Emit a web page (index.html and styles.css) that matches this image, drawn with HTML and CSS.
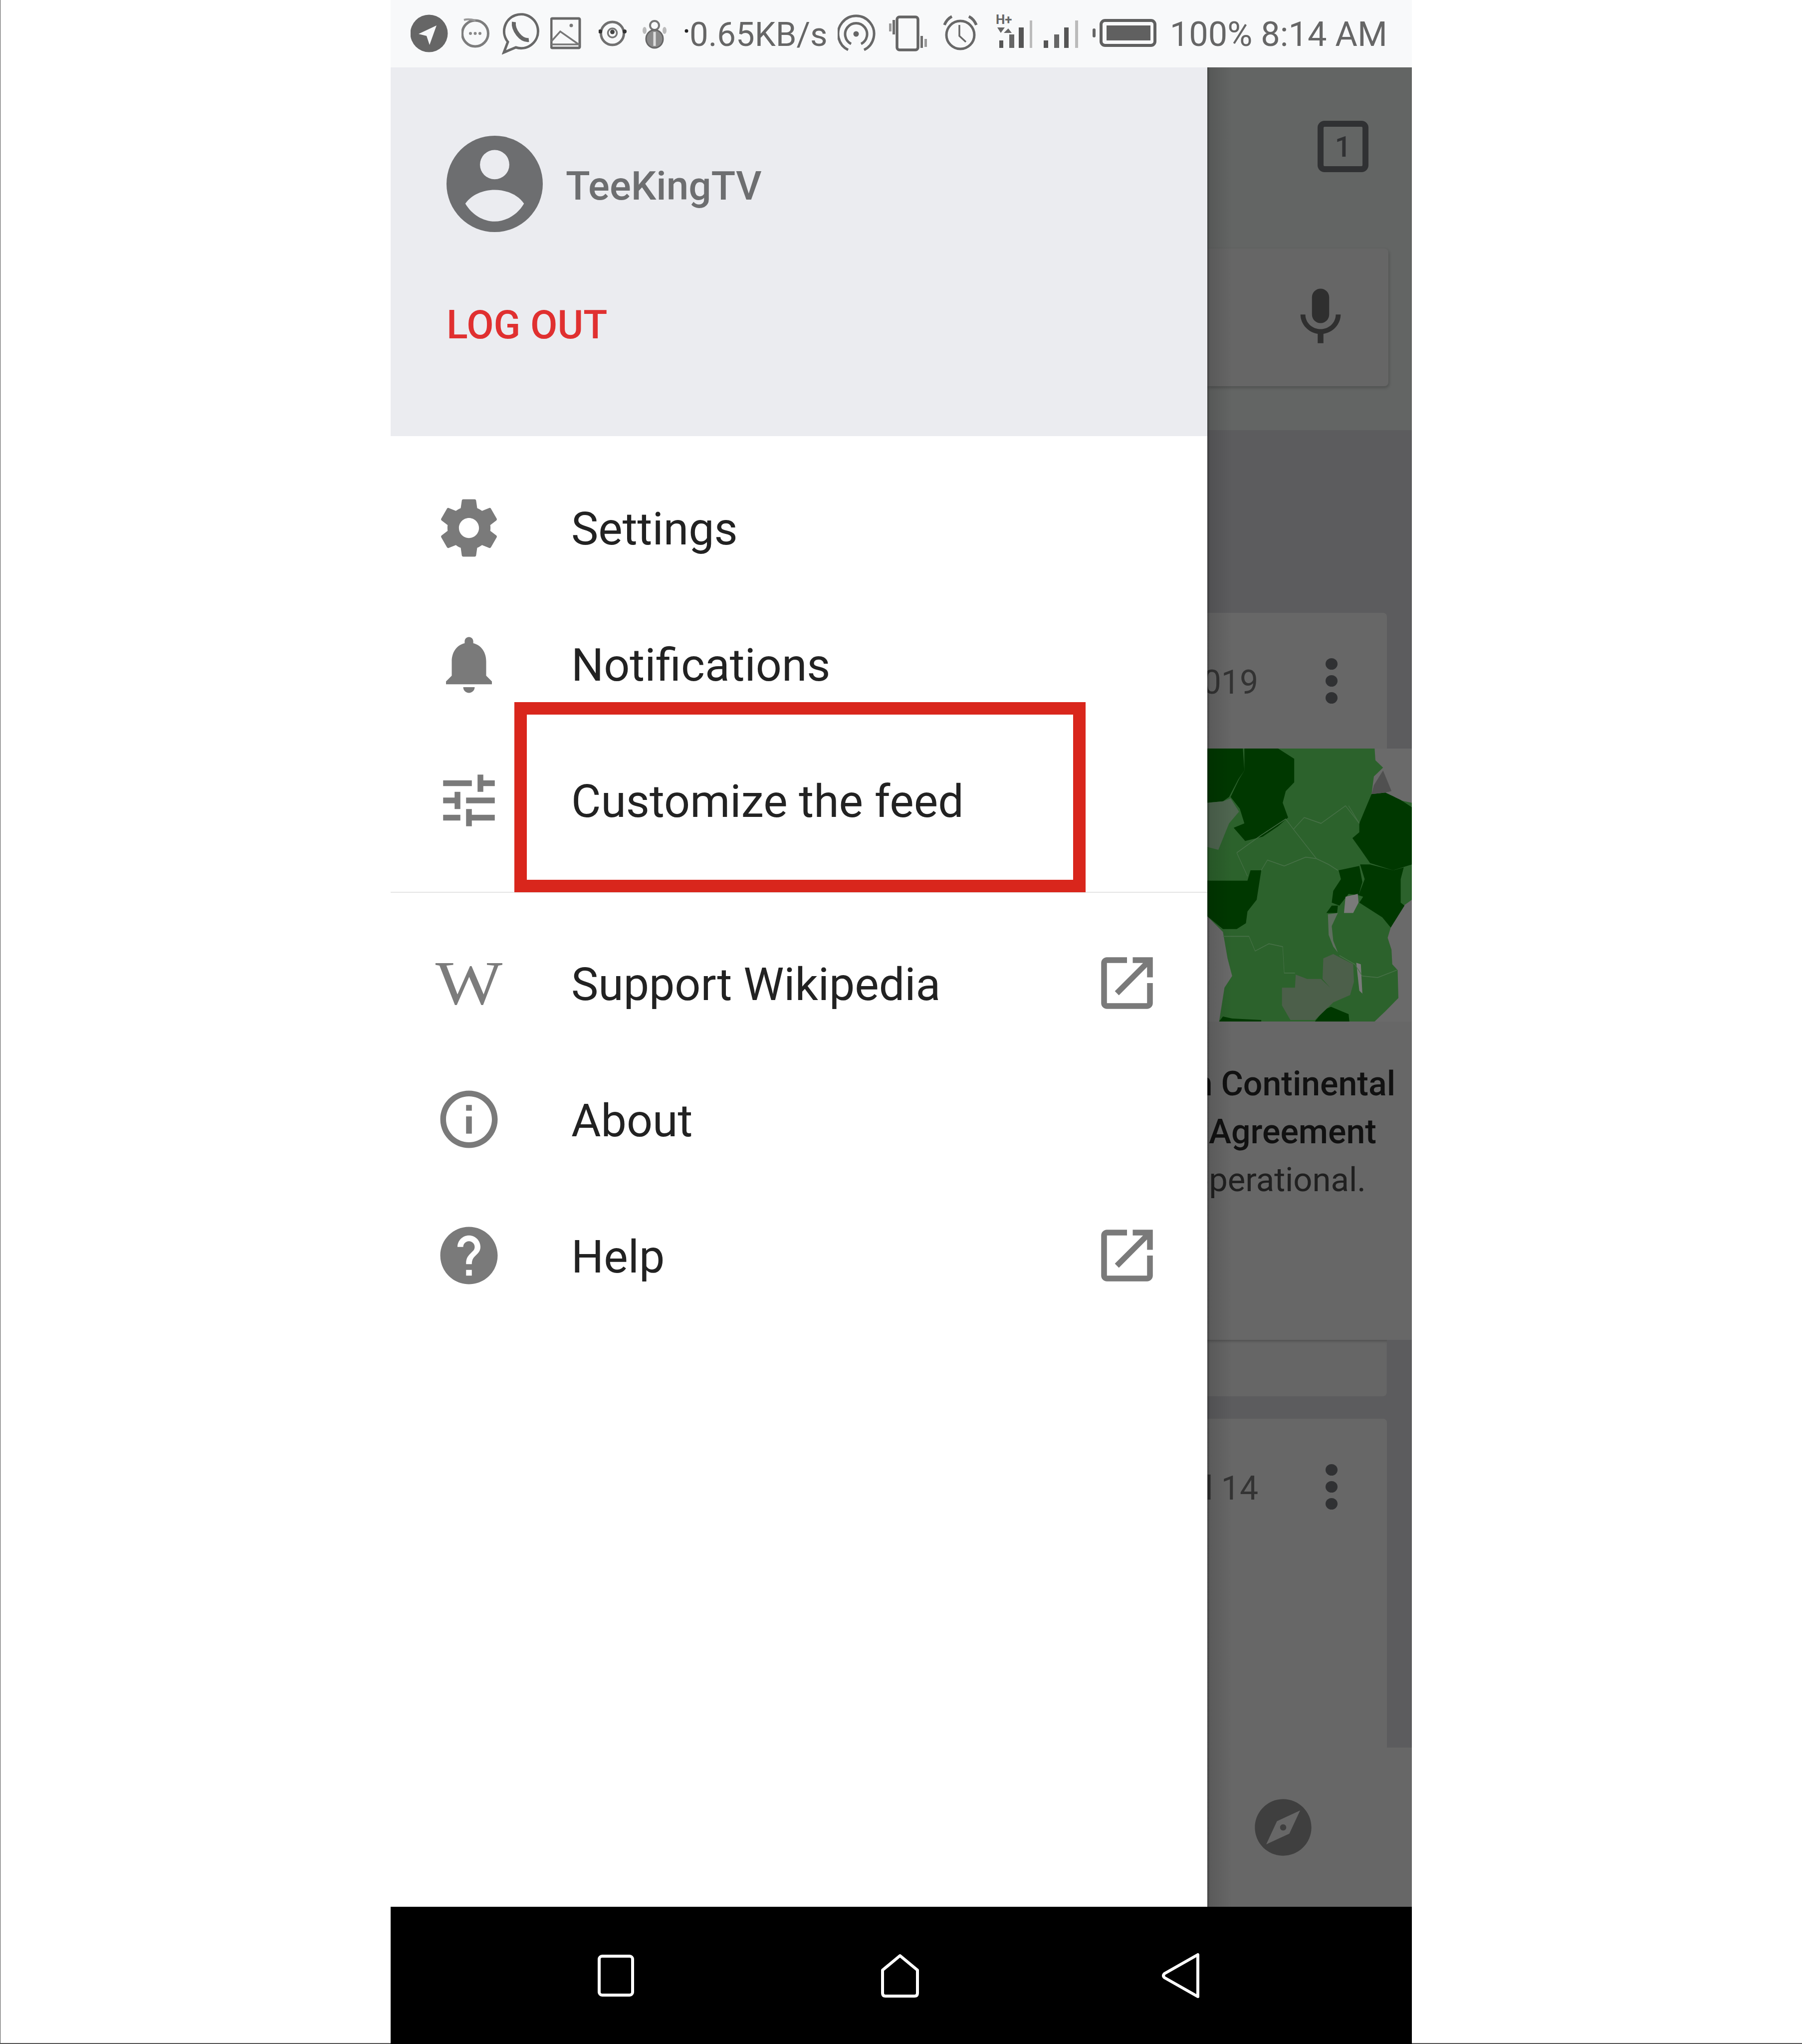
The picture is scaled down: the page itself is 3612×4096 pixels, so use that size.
FILE: index.html
```html
<!DOCTYPE html>
<html lang="en">
<head>
<meta charset="utf-8">
<title>Wikipedia drawer</title>
<link rel="stylesheet" href="styles.css">
</head>
<body>
<div class="phone">
  <div class="status">
    <svg class="si" width="102" height="134" viewBox="0 0 102 134"><circle cx="37" cy="67" r="37.5" fill="#666"/><path d="M52 51 16 68 32 72 38 90Z" fill="#f8f9fa"/></svg>
    <svg class="si" width="81" height="134" viewBox="0 0 81 134"><circle cx="27.5" cy="67" r="26" fill="none" stroke="#7d7d7d" stroke-width="5"/><path d="M5 40Q14 37 28 41" fill="none" stroke="#999" stroke-width="4"/><circle cx="18" cy="67" r="3" fill="#888"/><circle cx="27.5" cy="67" r="3" fill="#888"/><circle cx="37" cy="67" r="3" fill="#888"/></svg>
    <svg class="si" width="97" height="134" viewBox="0 0 97 134"><path d="M12 84A34 34 0 1 1 28 95L4 105Z" fill="none" stroke="#686868" stroke-width="5"/><path d="M24 44C22 60 38 82 54 80" fill="none" stroke="#666" stroke-width="8"/></svg>
    <svg class="si" width="97" height="134" viewBox="0 0 97 134"><rect x="2" y="37" width="57" height="59" rx="2" fill="none" stroke="#686868" stroke-width="5"/><path d="M2 83 20 63 57 89M2 89H59" fill="none" stroke="#777" stroke-width="3.5"/><circle cx="42" cy="51" r="3.5" fill="#777"/></svg>
    <svg class="si" width="88" height="134" viewBox="0 0 88 134"><circle cx="27.5" cy="67" r="23" fill="none" stroke="#707070" stroke-width="5"/><circle cx="27.5" cy="66" r="9" fill="none" stroke="#777" stroke-width="3.5"/><circle cx="27.5" cy="64" r="4.5" fill="#444"/><circle cx="3" cy="63" r="4" fill="#333"/><circle cx="52" cy="63" r="4" fill="#333"/></svg>
    <svg class="si" width="83" height="134" viewBox="0 0 83 134"><circle cx="24" cy="51" r="9" fill="none" stroke="#777" stroke-width="4"/><ellipse cx="24" cy="78" rx="17" ry="18" fill="#8a8a8a" stroke="#666" stroke-width="3"/><rect x="21.500" y="64" width="5" height="28" fill="#ddd"/><ellipse cx="4" cy="61" rx="4" ry="7" fill="#bbb"/><ellipse cx="44" cy="61" rx="4" ry="7" fill="#bbb"/></svg>
    <svg class="si" width="11" height="134" viewBox="0 0 11 134"><circle cx="5" cy="62" r="3.5" fill="#222"/></svg>
    <span class="stext speed">0.65KB/s</span>
    <svg class="si" width="102" height="134" viewBox="0 0 102 134"><path d="M21 100A36 36 0 1 1 53 100M27 88A22 22 0 1 1 47 88" fill="none" stroke="#686868" stroke-width="5"/><circle cx="37" cy="68" r="5.500" fill="#666"/></svg>
    <svg class="si" width="107" height="134" viewBox="0 0 107 134"><rect x="17" y="34" width="42" height="66" rx="5" fill="none" stroke="#646464" stroke-width="5.500"/><rect x="1" y="47" width="5" height="16" fill="#999"/><rect x="8" y="40" width="5" height="29" fill="#6e6e6e"/><rect x="64" y="72" width="5" height="24" fill="#6e6e6e"/><rect x="72" y="78" width="5" height="16" fill="#999"/></svg>
    <svg class="si" width="108" height="134" viewBox="0 0 108 134"><circle cx="37" cy="70" r="28" fill="none" stroke="#686868" stroke-width="5"/><path d="M35 50V72L48 84" fill="none" stroke="#686868" stroke-width="3.500"/><path d="M5 50Q10 38 20 33M69 50Q64 38 54 33" fill="none" stroke="#686868" stroke-width="5.500"/></svg>
    <svg class="si" width="96" height="134" viewBox="0 0 96 134"><text x="0" y="48" class="hplus">H+</text><path d="M3 55H18L10 66ZM16 66H32L25 57Z" fill="#666"/><rect x="7" y="81" width="8" height="15" fill="#555"/><rect x="27" y="69" width="10" height="27" fill="#666"/><rect x="46" y="55" width="10" height="41" fill="#555"/><rect x="68" y="41" width="5" height="55" fill="#bbb"/></svg>
    <svg class="si" width="98" height="134" viewBox="0 0 98 134"><rect x="0" y="81" width="9" height="15" fill="#555"/><rect x="21" y="69" width="10" height="27" fill="#666"/><rect x="41" y="55" width="9" height="41" fill="#555"/><rect x="63" y="41" width="6" height="55" fill="#bbb"/></svg>
    <svg class="si" width="158" height="134" viewBox="0 0 158 134"><rect x="0" y="57" width="6" height="18" rx="3" fill="#666"/><rect x="17" y="41" width="108" height="50" rx="8" fill="none" stroke="#606060" stroke-width="6"/><rect x="28" y="51" width="88" height="30" fill="#606060"/></svg>
    <span class="stext clock">100% 8:14 AM</span>
  </div>

  <div class="main">
    <div class="drawer">
      <div class="head">
        <div class="user">
          <svg class="avatar" width="193" height="193" viewBox="0 0 210 210"><circle cx="105" cy="105" r="105" fill="#6d6e70"/><circle cx="105" cy="63" r="32" fill="#ebecf0"/><path d="M41 148C55 128 80 118 105 118C130 118 155 128 169 148C155 172 130 187 105 187C80 187 55 172 41 148Z" fill="#ebecf0"/></svg>
          <span class="name">TeeKingTV</span>
        </div>
        <div class="logout">LOG OUT</div>
      </div>

      <div class="menu menu-top">
        <div class="row">
          <svg class="ico" viewBox="0 0 24 24"><path d="M19.43 12.98c.04-.32.07-.64.07-.98s-.03-.66-.07-.98l2.11-1.65c.19-.15.24-.42.12-.64l-2-3.46c-.12-.22-.39-.3-.61-.22l-2.49 1c-.52-.4-1.08-.73-1.69-.98l-.38-2.65C14.46 2.18 14.25 2 14 2h-4c-.25 0-.46.18-.49.42l-.38 2.65c-.61.25-1.17.59-1.69.98l-2.49-1c-.23-.09-.49 0-.61.22l-2 3.46c-.13.22-.07.49.12.64l2.11 1.65c-.04.32-.07.65-.07.98s.03.66.07.98l-2.11 1.65c-.19.15-.24.42-.12.64l2 3.46c.12.22.39.3.61.22l2.49-1c.52.4 1.08.73 1.69.98l.38 2.65c.03.24.24.42.49.42h4c.25 0 .46-.18.49-.42l.38-2.65c.61-.25 1.17-.59 1.69-.98l2.49 1c.23.09.49 0 .61-.22l2-3.46c.12-.22.07-.49-.12-.64l-2.11-1.65zM12 15.5c-1.93 0-3.5-1.57-3.5-3.5s1.57-3.5 3.5-3.5 3.5 1.57 3.5 3.5-1.57 3.5-3.5 3.5z"/></svg>
          <span class="label">Settings</span>
        </div>
        <div class="row">
          <svg class="ico" viewBox="0 0 24 24"><path d="M12 22c1.1 0 2-.9 2-2h-4c0 1.1.89 2 2 2zm6-6v-5c0-3.07-1.64-5.64-4.5-6.32V4c0-.83-.67-1.5-1.5-1.5s-1.5.67-1.5 1.5v.68C7.63 5.36 6 7.92 6 11v5l-2 2v1h16v-1l-2-2z"/></svg>
          <span class="label">Notifications</span>
        </div>
        <div class="row">
          <svg class="ico" viewBox="0 0 24 24"><path d="M3 17v2h6v-2H3zM3 5v2h10V5H3zm10 16v-2h8v-2h-8v-2h-2v6h2zM7 9v2H3v2h4v2h2V9H7zm14 4v-2H11v2h10zm-6-4h2V7h4V5h-4V3h-2v6z"/></svg>
          <span class="label">Customize the feed</span>
        </div>
        <div class="annot"></div>
      </div>

      <div class="menu menu-low">
        <div class="row">
          <span class="ico wbox"><span class="wlogo">W</span></span>
          <span class="label">Support Wikipedia</span>
          <svg class="ico ext" viewBox="0 0 24 24"><path d="M19 19H5V5h7V3H5c-1.11 0-2 .9-2 2v14c0 1.1.89 2 2 2h14c1.1 0 2-.9 2-2v-7h-2v7zM14 3v2h3.59l-9.83 9.83 1.41 1.41L19 6.41V10h2V3h-7z"/></svg>
        </div>
        <div class="row">
          <svg class="ico" viewBox="0 0 24 24"><path d="M11 7h2v2h-2zm0 4h2v6h-2zm1-9C6.48 2 2 6.48 2 12s4.48 10 10 10 10-4.48 10-10S17.52 2 12 2zm0 18c-4.41 0-8-3.59-8-8s3.59-8 8-8 8 3.59 8 8-3.59 8-8 8z"/></svg>
          <span class="label">About</span>
        </div>
        <div class="row">
          <svg class="ico" viewBox="0 0 24 24"><path d="M12 2C6.48 2 2 6.48 2 12s4.48 10 10 10 10-4.48 10-10S17.52 2 12 2zm1 17h-2v-2h2v2zm2.07-7.75l-.9.92C13.45 12.9 13 13.5 13 15h-2v-.5c0-1.1.45-2.1 1.17-2.83l1.24-1.26c.37-.36.59-.86.59-1.41 0-1.1-.9-2-2-2s-2 .9-2 2H8c0-2.21 1.79-4 4-4s4 1.79 4 4c0 .88-.36 1.68-.93 2.25z"/></svg>
          <span class="label">Help</span>
          <svg class="ico ext" viewBox="0 0 24 24"><path d="M19 19H5V5h7V3H5c-1.11 0-2 .9-2 2v14c0 1.1.89 2 2 2h14c1.1 0 2-.9 2-2v-7h-2v7zM14 3v2h3.59l-9.83 9.83 1.41 1.41L19 6.41V10h2V3h-7z"/></svg>
        </div>
      </div>
    </div>

    <div class="behind">
      <div class="b-top">
        <div class="tab">1</div>
        <div class="search">
          <svg class="mic" viewBox="0 0 24 24"><path d="M12 14c1.66 0 3-1.34 3-3V5c0-1.66-1.34-3-3-3S9 3.34 9 5v6c0 1.66 1.34 3 3 3zm5.3-3c0 3-2.54 5.1-5.3 5.1S6.7 14 6.7 11H5c0 3.41 2.72 6.23 6 6.72V21h2v-3.28c3.28-.48 6-3.3 6-6.72h-1.7z"/></svg>
        </div>
      </div>
      <div class="b-feed">
        <div class="c-head">
          <span class="date">2019</span>
          <span class="dots"><i></i><i></i><i></i></span>
        </div>
        <svg class="map" width="410" height="547" viewBox="138 515 1335 930" preserveAspectRatio="none">
          <rect x="138" y="515" width="1335" height="930" fill="#6a6a6a"/>
          <g class="land">
          <path fill="#2c622c" d="M135 515H1230L1235 555 1285 580 1225 610 1210 670 1473 700V1030L1420 1050 1335 1125 1315 1160 1340 1200 1345 1250 1380 1270 1385 1365 1300 1410 1230 1445H215L250 1330 300 1290 270 1230 240 1140 135 1085Z"/>
          <g fill="#003800">
            <path d="M135 515H370L380 590 340 620 280 680 240 695 135 700Z"/>
            <path d="M380 515H600L705 550V630L650 660 630 700 665 750 600 780 500 815 385 830 310 785 380 770 350 720 290 680 345 620 380 590Z"/>
            <path d="M1210 670 1300 665 1400 690 1473 715V910L1350 930 1200 905 1140 860 1085 820 1130 800V770L1170 720Z"/>
            <path d="M135 965H400L420 930H490L460 1030 400 1070 390 1110 330 1130H240L135 1085Z"/>
            <path d="M995 930 1130 915 1150 970 1125 1015 1060 1010 1000 1050 950 1040 960 1000 1010 960Z"/>
            <path d="M1135 910H1200L1350 930 1420 920 1400 960V1040L1425 1050 1335 1125 1280 1090 1130 1040 1155 1020 1125 1015 1165 960Z"/>
            <path d="M915 1075 950 1050H990L985 1075Z"/>
            <path d="M840 1445 900 1405 945 1395 1060 1420 1065 1445Z"/>
            <path d="M215 1445 240 1428 300 1435 490 1440V1445Z"/>
          </g>
          <path fill="#4f6650" d="M135 700 240 695 290 685 345 730 280 770 210 860 135 850Z"/>
          <path fill="#4c5f4a" d="M625 1330H710L715 1285 790 1300H880L940 1330 890 1300 895 1230 960 1215 1090 1250 1095 1310 1070 1355 960 1380 840 1440H680L625 1390Z"/>
          <path fill="#505050" d="M1285 590 1225 640 1210 670 1300 665 1340 660Z"/>
          <path fill="#7a7a7a" d="M1040 1020 1120 1010 1125 1040 1090 1075H1030Z"/>
          <path fill="#5f6f5f" d="M925 1080 990 1075 950 1120 960 1170 990 1210 960 1190 930 1150Z"/>
          <path fill="#7a7a7a" d="M1110 1245 1140 1250 1150 1350 1170 1360 1130 1340Z"/>
          <g fill="none" stroke="#477147" stroke-width="3">
            <path d="M700 790 770 750 880 770 1040 710 1130 770"/>
            <path d="M700 790 850 890 930 910 990 930"/>
            <path d="M330 870 400 950M330 870 490 810 650 755 700 790"/>
            <path d="M490 930 530 895 640 915 780 885 850 890"/>
            <path d="M240 1155H410L450 1205 540 1180 630 1190 640 1280H710"/>
            <path d="M1060 710 1130 770"/>
            <path d="M1000 1220 1100 1250 1150 1290 1250 1295 1375 1270"/>
          </g>
          </g>
        </svg>
        <div class="c-body">
          <div class="line bold l1">the African Continental</div>
          <div class="line bold l2">Free Trade Agreement</div>
          <div class="line l3">now operational.</div>
        </div>
        <div class="stack"></div>
        <div class="card2">
          <div class="c-head">
            <span class="date">Jul 14</span>
            <span class="dots"><i></i><i></i><i></i></span>
          </div>
        </div>
      </div>
      <div class="b-bottom">
        <svg class="compass" viewBox="0 0 24 24"><path d="M12 10.9c-.61 0-1.1.49-1.1 1.1s.49 1.1 1.1 1.1c.61 0 1.1-.49 1.1-1.1s-.49-1.1-1.1-1.1zM12 2C6.48 2 2 6.48 2 12s4.48 10 10 10 10-4.48 10-10S17.52 2 12 2zm2.19 12.19L6 18l3.81-8.19L18 6l-3.81 8.19z"/></svg>
      </div>
    </div>
  </div>

  <div class="nav">
    <svg width="73" height="84" viewBox="0 0 73 84"><rect x="3" y="3" width="67" height="78" rx="6" fill="none" stroke="#fff" stroke-width="6"/></svg>
    <svg class="home" width="76" height="88" viewBox="0 0 76 88"><path d="M38 4 73 33V79Q73 85 67 85H9Q3 85 3 79V33Z" fill="none" stroke="#fff" stroke-width="6" stroke-linejoin="round"/></svg>
    <svg width="75" height="92" viewBox="0 0 75 92"><path d="M72 4V88L5 50Q1 46 5 42Z" fill="none" stroke="#fff" stroke-width="6" stroke-linejoin="round"/></svg>
  </div>
</div>
</body>
</html>
```

FILE: styles.css
```css
* { box-sizing: border-box; }
html, body { margin: 0; padding: 0; }
body {
  width: 3612px;
  height: 4096px;
  overflow: hidden;
  background: #fff;
  font-family: Roboto, "Liberation Sans", sans-serif;
  box-shadow: inset 1px 0 #555, inset 0 -2px #555;
}
.phone {
  width: 2047px;
  height: 4096px;
  margin-left: 783px;
  display: flex;
  flex-direction: column;
}

/* status bar */
.status {
  height: 135px;
  flex: none;
  background: #f8f9fa;
  padding-left: 40px;
  display: flex;
  align-items: flex-start;
}
.si { display: block; flex: none; }
.stext {
  font-size: 67px;
  line-height: 80px;
  margin-top: 29px;
  color: #666;
  white-space: nowrap;
}
.speed { margin-right: 20px; }
.clock { font-size: 68.5px; margin-left: -3px; }
.hplus { font-family: Roboto, sans-serif; font-size: 26px; font-weight: 700; fill: #666; }

/* main */
.main { flex: 1; min-height: 0; display: flex; }
.drawer { width: 1637px; flex: none; background: #fff; display: flex; flex-direction: column; }
.head { height: 739px; flex: none; background: #ebecf0; padding: 137px 0 0 112px; }
.user { display: flex; align-items: center; gap: 46px; }
.avatar { display: block; flex: none; }
.name { font-size: 80px; line-height: 94px; font-weight: 500; color: #6d6e70; position: relative; top: 4px; }
.logout { margin-top: 139px; font-size: 79px; line-height: 94px; font-weight: 500; color: #e03030; }

.menu { padding: 47px 0; position: relative; }
.menu-top { border-bottom: 2px solid #e4e4e4; }
.row { height: 273px; display: flex; align-items: center; padding-left: 88px; }
.ico { width: 138px; height: 138px; fill: #7a7a7a; flex: none; display: block; }
.label { margin-left: 136px; font-size: 91.4px; line-height: 106px; color: #222; white-space: nowrap; }
.menu-top .label { margin-top: 5px; }
.menu-low .ico { margin-top: -6px; }
.ext { margin-left: auto; margin-right: 92px; }
.wbox { display: flex; align-items: center; justify-content: center; }
.wlogo { font-family: "Liberation Serif", serif; font-size: 125px; line-height: 138px; color: #7c7c7c; transform: scaleX(1.14); }
.annot {
  position: absolute;
  left: 248px;
  top: 533px;
  width: 1145px;
  height: 381px;
  border: 25px solid #d9261c;
}

/* content dimmed behind the drawer */
.behind { flex: 1; min-width: 0; display: flex; flex-direction: column; position: relative; overflow: hidden; }
.behind::before {
  content: "";
  position: absolute;
  left: 0; top: 0; bottom: 0;
  width: 50px;
  z-index: 2;
  background: linear-gradient(to right, rgba(0,0,0,.4), rgba(0,0,0,.12) 10%, rgba(0,0,0,0));
}
.b-top {
  height: 727px;
  flex: none;
  background: #636564;
  padding-top: 107px;
  display: flex;
  flex-direction: column;
  align-items: flex-end;
}
.tab {
  width: 102px;
  height: 103px;
  margin-right: 87px;
  border: 12px solid #303133;
  border-radius: 14px;
  display: flex;
  align-items: center;
  justify-content: center;
  font-size: 58px;
  font-weight: 500;
  color: #303133;
}
.search {
  margin-top: 153px;
  margin-right: 47px;
  width: 363px;
  height: 276px;
  background: #666;
  border-radius: 0 8px 8px 0;
  box-shadow: 1px 3px 6px rgba(0,0,0,.22);
  display: flex;
  align-items: center;
  justify-content: flex-end;
  padding-right: 67px;
}
.mic { width: 138px; height: 138px; fill: #2f2f2f; display: block; }
.b-feed { flex: 1; min-height: 0; background: #5c5c5e; padding-top: 366px; display: flex; flex-direction: column; overflow: hidden; }
.c-head {
  height: 272px;
  flex: none;
  margin-right: 50px;
  background: #676767;
  border-radius: 0 8px 0 0;
  display: flex;
  align-items: center;
  justify-content: flex-end;
  white-space: nowrap;
  overflow: hidden;
}
.date { font-size: 66px; color: #333; margin-right: 135px; margin-top: 6px; flex: none; }
.dots { display: flex; flex-direction: column; gap: 11px; margin-right: 99px; flex: none; }
.dots i { display: block; width: 24px; height: 23px; border-radius: 50%; background: #303133; }
.map { display: block; flex: none; }
.land { filter: blur(1px); }
.c-body { height: 638px; flex: none; background: #676767; padding-top: 77px; overflow: hidden; }
.line { display: flex; justify-content: flex-end; white-space: nowrap; font-size: 67px; line-height: 96px; color: #202020; }
.bold { font-size: 68px; font-weight: 500; color: #111; }
.l1 { padding-right: 33px; }
.l2 { padding-right: 71px; }
.l3 { padding-right: 92px; }
.stack { height: 113px; flex: none; margin-right: 50px; background: #666; border-radius: 0 0 8px 0; box-shadow: inset 0 6px 6px -4px rgba(0,0,0,.25); }
.card2 { flex: 1; min-height: 0; margin-top: 45px; margin-right: 50px; background: #676767; border-radius: 0 8px 0 0; }
.card2 .c-head { margin-right: 0; }
.b-bottom { height: 319px; flex: none; background: #676767; display: flex; align-items: center; padding-left: 84px; }
.compass { width: 136px; height: 136px; fill: #3f3f3f; display: block; }

/* nav */
.nav {
  height: 275px;
  flex: none;
  background: #000;
  display: flex;
  align-items: center;
  padding-left: 415px;
  gap: 491px;
}
.nav svg { display: block; flex: none; }
.nav .home { margin-left: 4px; margin-right: -4px; }
```
